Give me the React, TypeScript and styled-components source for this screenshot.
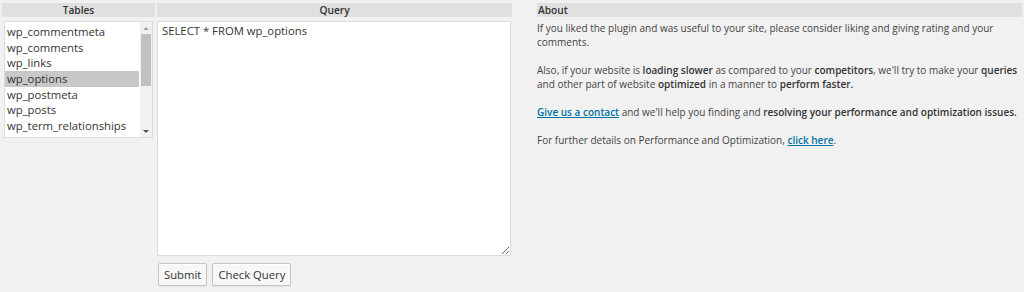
import React, { useState } from "react";
import styled, { createGlobalStyle } from "styled-components";

const GlobalStyle = createGlobalStyle`
  html, body {
    margin: 0;
    padding: 0;
    background: #f1f1f1;
    font-family: "Open Sans", "Noto Sans", sans-serif;
    color: #444;
  }
`;

const Page = styled.div`
  display: flex;
  align-items: flex-start;
  gap: 2px;
  padding: 3px 2px 0 2px;
  width: 1024px;
  height: 292px;
  box-sizing: border-box;
`;

const Column = styled.div<{ $width: number; $offset?: number }>`
  display: flex;
  flex-direction: column;
  flex: none;
  width: ${(p) => p.$width}px;
  margin-left: ${(p) => p.$offset || 0}px;
`;

const HeaderBar = styled.div<{ $align?: string }>`
  height: 14px;
  line-height: 14px;
  background: #e0e0e0;
  color: #333;
  font-size: 10.2px;
  font-weight: 600;
  text-align: ${(p) => p.$align || "center"};
  padding: 0 1px;
`;

const ListBox = styled.div`
  margin: 4px 2px 0 2px;
  height: 117px;
  box-sizing: border-box;
  border: 1px solid #dcdcdc;
  background: #fff;
  display: flex;
  padding: 2px 0 0 0;
`;

const Items = styled.ul`
  list-style: none;
  margin: 0;
  padding: 0;
  flex: 1;
`;

const Item = styled.li<{ $selected?: boolean }>`
  height: 15.7px;
  line-height: 15.7px;
  font-size: 11.3px;
  padding-left: 2px;
  color: #333;
  background: ${(p) => (p.$selected ? "#c8c8c8" : "transparent")};
  white-space: nowrap;
  cursor: default;
`;

const ScrollTrack = styled.div`
  width: 12px;
  margin: -2px 0 0 1px;
  background: #f1f1f1;
  display: flex;
  flex-direction: column;
  align-items: center;
`;

const Arrow = styled.div<{ $down?: boolean }>`
  width: 0;
  height: 0;
  border-left: 3px solid transparent;
  border-right: 3px solid transparent;
  ${(p) =>
    p.$down
      ? "border-top: 3px solid #505050; margin-top: auto; margin-bottom: 4px;"
      : "border-bottom: 3px solid #a3a3a3; margin-top: 5px;"}
`;

const Thumb = styled.div`
  width: 10px;
  height: 52px;
  margin-top: 4px;
  background: #c1c1c1;
`;

const QueryArea = styled.textarea`
  margin-top: 4px;
  width: 354px;
  height: 235px;
  box-sizing: border-box;
  border: 1px solid #dcdcdc;
  background: #fff;
  padding: 1px 4px;
  font-family: "Open Sans", "Noto Sans", sans-serif;
  font-size: 11.3px;
  line-height: 16px;
  color: #333;
  resize: both;
  outline: none;
`;

const ButtonRow = styled.div`
  display: flex;
  gap: 5px;
  margin: 7px 0 0 1px;
`;

const Button = styled.button`
  height: 23px;
  padding: 0 5px;
  border: 1px solid #c4c4c4;
  border-radius: 2px;
  background: #f7f7f7;
  box-shadow: inset 0 1px 0 #fff, 0 1px 0 rgba(0, 0, 0, 0.06);
  font-family: "Open Sans", "Noto Sans", sans-serif;
  font-size: 11.3px;
  color: #333;
  cursor: pointer;
`;

const AboutText = styled.div`
  margin-top: 4px;
  font-size: 10px;
  line-height: 14px;
  color: #444;

  p {
    margin: 0 0 14px 0;
  }

  b {
    font-weight: 600;
    color: #333;
  }

  a {
    color: #0074a2;
    font-weight: 600;
    text-decoration: underline;
  }
`;

const tables = [
  "wp_commentmeta",
  "wp_comments",
  "wp_links",
  "wp_options",
  "wp_postmeta",
  "wp_posts",
  "wp_term_relationships",
];

export default function App() {
  const [selected, setSelected] = useState("wp_options");
  const [query, setQuery] = useState("SELECT * FROM wp_options");

  return (
    <>
      <GlobalStyle />
      <Page>
        <Column $width={153}>
          <HeaderBar>Tables</HeaderBar>
          <ListBox>
            <Items>
              {tables.map((t) => (
                <Item
                  key={t}
                  $selected={t === selected}
                  onClick={() => {
                    setSelected(t);
                    setQuery(`SELECT * FROM ${t}`);
                  }}
                >
                  {t}
                </Item>
              ))}
            </Items>
            <ScrollTrack>
              <Arrow />
              <Thumb />
              <Arrow $down />
            </ScrollTrack>
          </ListBox>
        </Column>
        <Column $width={355}>
          <HeaderBar>Query</HeaderBar>
          <QueryArea value={query} onChange={(e) => setQuery(e.target.value)} />
          <ButtonRow>
            <Button>Submit</Button>
            <Button>Check Query</Button>
          </ButtonRow>
        </Column>
        <Column $width={485} $offset={23}>
          <HeaderBar $align="left">About</HeaderBar>
          <AboutText>
            <p>
              If you liked the plugin and was useful to your site, please consider liking and
              giving rating and your comments.
            </p>
            <p>
              Also, if your website is <b>loading slower</b> as compared to your{" "}
              <b>competitors</b>, we'll try to make your <b>queries</b> and other part of website{" "}
              <b>optimized</b> in a manner to <b>perform faster.</b>
            </p>
            <p>
              <a href="#">Give us a contact</a> and we'll help you finding and{" "}
              <b>resolving your performance and optimization issues.</b>
            </p>
            <p>
              For further details on Performance and Optimization, <a href="#">click here</a>.
            </p>
          </AboutText>
        </Column>
      </Page>
    </>
  );
}
